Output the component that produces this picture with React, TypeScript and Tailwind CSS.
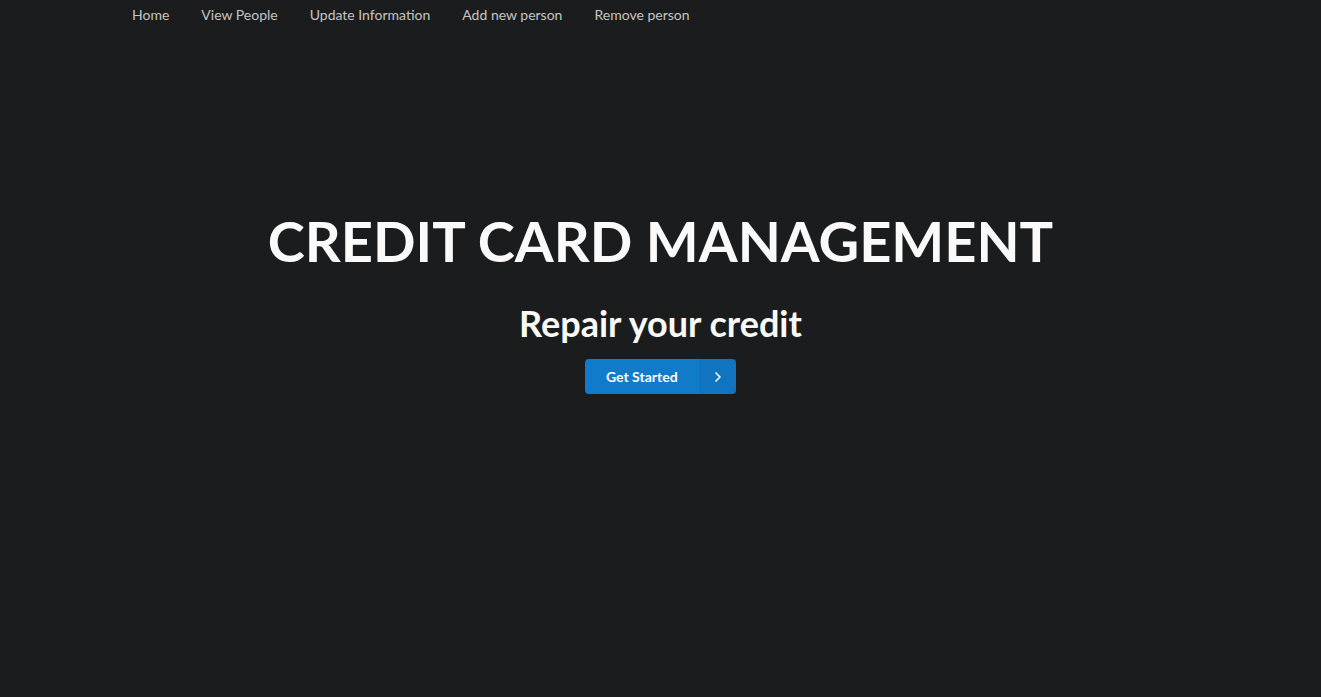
import { ChevronRight } from "lucide-react";

const links = ["Home", "View People", "Update Information", "Add new person", "Remove person"];

export default function App() {
  return (
    <div
      className="flex min-h-[697px] flex-col bg-[#1b1c1d] text-white"
      style={{ fontFamily: "Lato, 'Liberation Sans', sans-serif" }}
    >
      <nav className="flex pl-[116px]">
        {links.map((l) => (
          <a
            key={l}
            className="px-4 pt-[6px] pb-[7px] text-[14px] leading-[18px] text-white/75"
          >
            {l}
          </a>
        ))}
      </nav>
      <div className="flex flex-col items-center pt-[175px]">
        <h1 className="text-[56px] font-bold leading-[70px] text-[#fafafa]">
          CREDIT CARD MANAGEMENT
        </h1>
        <h2 className="mt-[25px] text-[36px] font-bold leading-[44px] text-[#fafafa]">
          Repair your credit
        </h2>
        <button className="mt-[14px] flex h-[35px] w-[151px] items-stretch overflow-hidden rounded-[4px] bg-[#117bcb] text-[14px] font-bold text-white">
          <span className="flex flex-1 items-center pl-[21px]">Get Started</span>
          <span className="flex w-[37px] items-center justify-center bg-black/5">
            <ChevronRight size={16} strokeWidth={2.5} />
          </span>
        </button>
      </div>
    </div>
  );
}
